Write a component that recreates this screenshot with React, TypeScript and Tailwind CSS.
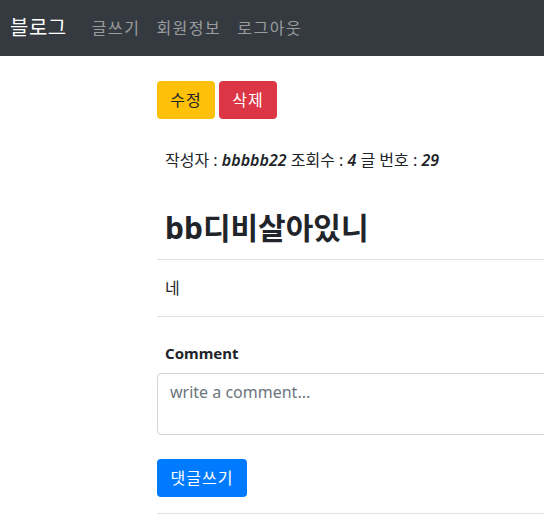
import React from 'react';

const App = () => {
  const font = "font-['Noto_Sans','Noto_Sans_CJK_KR',sans-serif]";
  return (
    <div className={`min-h-screen bg-white overflow-hidden text-[#212529] ${font}`}>
      {/* Navbar */}
      <nav className="h-[56px] bg-[#343a40] flex items-center px-[10px]">
        <span className="text-white text-[20px] tracking-[0.5px] mr-[25px]">블로그</span>
        <div className="flex gap-[16px] text-[16px] tracking-[1.5px] text-white/50">
          <span>글쓰기</span>
          <span>회원정보</span>
          <span>로그아웃</span>
        </div>
      </nav>

      <div className="ml-[157px] w-[1140px]">
        <div className="flex gap-[4px] pt-[25px]">
          <button className="h-[38px] w-[58px] rounded bg-[#ffc107] text-[#212529] text-[16px] tracking-[1px]">수정</button>
          <button className="h-[38px] w-[58px] rounded bg-[#dc3545] text-white text-[16px] tracking-[1px]">삭제</button>
        </div>

        <div className="px-[8px] pt-[29px] text-[16px] leading-[24px]">
          작성자 : <i className="font-semibold">bbbbb22</i> 조회수 : <i className="font-semibold">4</i> 글 번호 : <i className="font-semibold">29</i>
        </div>

        <h3 className="px-[8px] pt-[36px] text-[30px] font-bold leading-[40px] text-[#212529]">bb디비살아있니</h3>
        <hr className="mt-[11px] border-[#e2e2e2]" />
        <div className="px-[8px] py-[16px] text-[16px] leading-[24px]">네</div>
        <hr className="border-[#e2e2e2]" />

        <div className="pt-[25px]">
          <label className="block px-[8px] text-[15px] font-bold leading-[22px]">Comment</label>
          <textarea
            className="mt-[9px] block w-full h-[62px] border border-[#ced4da] rounded px-[12px] py-[6px] text-[16px] resize-none placeholder:text-[#6c757d]"
            placeholder="write a comment..."
          />
        </div>

        <button className="mt-[24px] h-[38px] w-[90px] rounded bg-[#007bff] text-white text-[16px] tracking-[1px]">댓글쓰기</button>
        <hr className="mt-[16px] border-[#e2e2e2]" />
      </div>
    </div>
  );
};

export default App;
